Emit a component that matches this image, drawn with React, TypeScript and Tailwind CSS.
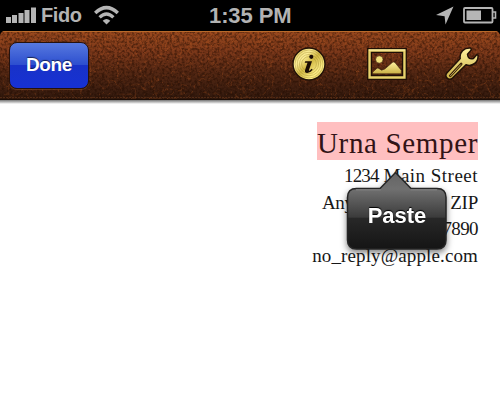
import React from "react";

function StatusBar() {
  return (
    <div className="relative flex h-[31px] items-center bg-black text-[#b3b3b3]">
      <svg className="ml-[6px] mt-[-2px] block" width="30" height="18" viewBox="0 0 30 18" fill="#b5b5b5">
        <rect x="0" y="11" width="5" height="6" />
        <rect x="6" y="9" width="5" height="8" />
        <rect x="12.5" y="7" width="5" height="10" />
        <rect x="18.5" y="4" width="5" height="13" />
        <rect x="25" y="1.5" width="5" height="15.5" />
      </svg>
      <span className="ml-[5px] w-[41px] whitespace-nowrap text-[20px] font-bold leading-[31px] tracking-[-0.4px]">Fido</span>
      <svg className="ml-[12px] mt-[-1px] block" width="25" height="20" viewBox="0 0 25 20" fill="none" stroke="#b5b5b5">
        <path d="M1.2 8Q12.5-2.8 23.8 8" strokeWidth="3.4" />
        <path d="M5.6 12.4Q12.5 5.7 19.4 12.4" strokeWidth="3.3" />
        <path d="M12.5 19.6L8.7 15.8Q12.5 12.3 16.3 15.8Z" fill="#b5b5b5" stroke="none" />
      </svg>
      <span className="ml-[90px] w-[84px] whitespace-nowrap text-[22px] font-bold leading-[31px] tracking-[-0.1px]">1:35 PM</span>
      <svg className="ml-[143px] mt-[-1px] block" width="18" height="19" viewBox="0 0 18 19" fill="#b5b5b5">
        <path d="M17.5.5L9.5 18.5 8.6 10.2 0 9.1Z" />
      </svg>
      <svg className="ml-[9px] mt-[-2px] block" width="34" height="18" viewBox="0 0 34 18" fill="none">
        <rect x="1" y="2" width="28.5" height="14.5" rx="1" stroke="#b5b5b5" strokeWidth="1.8" />
        <rect x="3.5" y="4.5" width="14.5" height="9.5" fill="#b5b5b5" />
        <path d="M30 6h2.5v6H30" stroke="#b5b5b5" strokeWidth="1.6" />
      </svg>
    </div>
  );
}

function Leather() {
  return (
    <svg className="absolute inset-0" width="500" height="70">
      <defs>
        <linearGradient id="hide" x1="0" y1="0" x2="0" y2="1">
          <stop offset="0" stopColor="#9a491e" />
          <stop offset=".3" stopColor="#7b381a" />
          <stop offset=".6" stopColor="#532713" />
          <stop offset="1" stopColor="#2f180d" />
        </linearGradient>
        <filter id="grain" x="0" y="0" width="100%" height="100%" colorInterpolationFilters="sRGB">
          <feTurbulence type="turbulence" baseFrequency=".11" numOctaves="4" seed="12" />
          <feColorMatrix values="0 0 0 0 .78  0 0 0 0 .38  0 0 0 0 .14  -4 0 0 0 .85" />
        </filter>
        <filter id="pores" x="0" y="0" width="100%" height="100%" colorInterpolationFilters="sRGB">
          <feTurbulence type="fractalNoise" baseFrequency=".4" numOctaves="3" seed="4" />
          <feColorMatrix values="0 0 0 0 .12  0 0 0 0 .04  0 0 0 0 0  3 0 0 0 -1.2" />
        </filter>
      </defs>
      <rect width="500" height="70" fill="url(#hide)" />
      <rect width="500" height="70" filter="url(#grain)" opacity=".45" />
      <rect width="500" height="70" filter="url(#pores)" opacity=".5" />
      <path d="M0 .5H500" stroke="#b86a2b" />
      <path d="M0 66.5H500" stroke="#794322" strokeDasharray="2 1" opacity=".45" />
      <path d="M0 68.5H500" stroke="#1b0d07" />
    </svg>
  );
}

function InfoIcon() {
  return (
    <svg className="block" width="34" height="34" viewBox="0 0 34 34">
      <defs>
        <linearGradient id="gold" x1="0" y1="0" x2="1" y2="1">
          <stop offset="0" stopColor="#cdb444" />
          <stop offset=".3" stopColor="#fff19a" />
          <stop offset=".5" stopColor="#d2b945" />
          <stop offset=".75" stopColor="#fff08a" />
          <stop offset="1" stopColor="#b89d30" />
        </linearGradient>
      </defs>
      <circle cx="17" cy="17" r="16" fill="url(#gold)" stroke="#201007" strokeWidth="1.4" />
      <g fill="none" stroke="#8f7923" strokeWidth=".7" opacity=".5">
        <circle cx="17" cy="17" r="14" /><circle cx="17" cy="17" r="11.8" />
        <circle cx="17" cy="17" r="9.6" /><circle cx="17" cy="17" r="7.4" />
      </g>
      <g fill="#1a0c04">
        <circle cx="19.3" cy="9.8" r="2.1" />
        <path d="M13.3 14.2H20l-3 8.7q-.4 1.4.8.7l1.8-1.8 1.1.9q-2.7 3.5-5.6 3.4-3.1-.3-1.8-3.9l2.2-6.5h-2.8z" />
      </g>
    </svg>
  );
}

function PictureIcon() {
  return (
    <svg className="block" width="40" height="32" viewBox="0 0 40 32">
      <defs><linearGradient id="pale" x2="0" y2="1"><stop stopColor="#fff1a0" /><stop offset="1" stopColor="#cab044" /></linearGradient></defs>
      <path fillRule="evenodd" d="M.7.7H39.3V31.3H.7ZM4.4 4.4V27.6H35.6V4.4Z" fill="#e8d36c" stroke="#1e0e06" strokeWidth="1.3" />
      <path d="M1.8 2H38.2" stroke="#fff4b3" strokeWidth="1" />
      <circle cx="12.3" cy="11.5" r="3.7" fill="#f3df7c" stroke="#3b220e" strokeWidth=".6" />
      <path d="M5.6 25.8V24.2l4.2-3.8q1-.8 2 0l2.8 1.8 3.2-1.2 7.5-6.5q1.3-1 2.6 0l6.4 7.8v3.5Z" fill="url(#pale)" stroke="#3b220e" strokeWidth=".6" />
    </svg>
  );
}

function WrenchIcon() {
  return (
    <svg className="block" width="34" height="34" viewBox="0 0 34 34">
      <path d="M25.8 1C19 .3 14.2 5.1 15.2 11.6L1.8 26.1C-1 29.5 3.5 34.4 7.5 31.1L21 17.8C27.5 20.2 33.8 15 33 8.2L31.6 7.7 28.4 11.6Q23 13 22.5 7.2L26.3 3Z" fill="url(#pale)" stroke="#211007" strokeWidth="1.5" strokeLinejoin="round" />
      <path d="M16.2 17L5.2 28.8" stroke="#372009" strokeWidth="2.6" strokeLinecap="round" />
      <path d="M15.6 17.8L5.3 29" stroke="#cbb65b" strokeWidth=".9" strokeLinecap="round" />
    </svg>
  );
}

function Toolbar() {
  return (
    <div className="bg-black">
      <header className="relative h-[69px] overflow-hidden rounded-t-[5px]">
        <Leather />
        <div className="relative flex items-start">
          <button className="ml-[9px] mt-[11px] h-[47px] w-[80px] rounded-[8px] border-[1.5px] border-[#26120e] bg-[linear-gradient(180deg,#5779df_0%,#2d4fcf_48%,#1832c8_50%,#1731d4_100%)] pb-[1px] text-[19px] font-bold tracking-[-0.35px] text-white shadow-[0_1px_1px_#8b512d99] [text-shadow:0_-1px_1px_#00000099]">Done</button>
          <div className="ml-[203px] mt-[16px]"><InfoIcon /></div>
          <div className="ml-[41px] mt-[17px]"><PictureIcon /></div>
          <div className="ml-[38px] mt-[16px]"><WrenchIcon /></div>
        </div>
      </header>
    </div>
  );
}

function PasteMenu() {
  return (
    <div className="absolute left-[346px] top-[171px] drop-shadow-[0_3px_3px_#00000080]">
      <svg className="block" width="102" height="80" viewBox="0 0 102 80">
        <defs>
          <linearGradient id="menu" gradientUnits="userSpaceOnUse" x1="0" y1="1" x2="0" y2="79">
            <stop stopColor="#646464" /><stop offset=".22" stopColor="#707070" />
            <stop offset=".58" stopColor="#3b3b3b" /><stop offset=".59" stopColor="#282828" />
            <stop offset="1" stopColor="#141414" />
          </linearGradient>
        </defs>
        <path d="M49.5 1.5L65 17.5H91Q100 17.5 100 26.5V69Q100 78 91 78H10.5Q1.5 78 1.5 69V26.5Q1.5 17.5 10.5 17.5H34Z" fill="url(#menu)" stroke="#252525" strokeWidth="1.5" />
        <path d="M10 18.8H34.8M64.5 18.8H91" stroke="#929292" strokeWidth=".8" />
      </svg>
      <span className="absolute inset-x-0 top-[31px] text-center text-[22px] font-bold leading-[28px] text-white [text-shadow:0_-1px_1px_#000]">Paste</span>
    </div>
  );
}

export default function App() {
  return (
    <main className="relative h-[413px] w-[500px] overflow-hidden bg-white font-['Liberation_Sans',Arial,sans-serif]">
      <StatusBar />
      <Toolbar />
      <div className="h-[4px] bg-gradient-to-b from-[#777777] to-white" />
      <section className="mt-[18px] flex flex-col items-end pr-[22px] font-['Liberation_Serif',serif] text-[19px] leading-[27px] text-[#171717]">
        <h1 className="h-[38px] w-[161px] whitespace-nowrap bg-[#ffbfc0] text-[29px] font-normal leading-[42px] tracking-[0.66px] text-[#321316]">Urna Semper</h1>
        <p className="mt-[2px] h-[27px]"><span className="tracking-[-0.8px]">1234</span> <span className="tracking-[0.48px]">Main Street</span></p>
        <p className="h-[26px] tracking-[-0.25px]">Any Town, State ZIP</p>
        <p className="h-[27px] tracking-[-0.6px]">123.456.7890</p>
        <p className="h-[27px] tracking-[0.12px]">no_reply@apple.com</p>
      </section>
      <PasteMenu />
    </main>
  );
}
